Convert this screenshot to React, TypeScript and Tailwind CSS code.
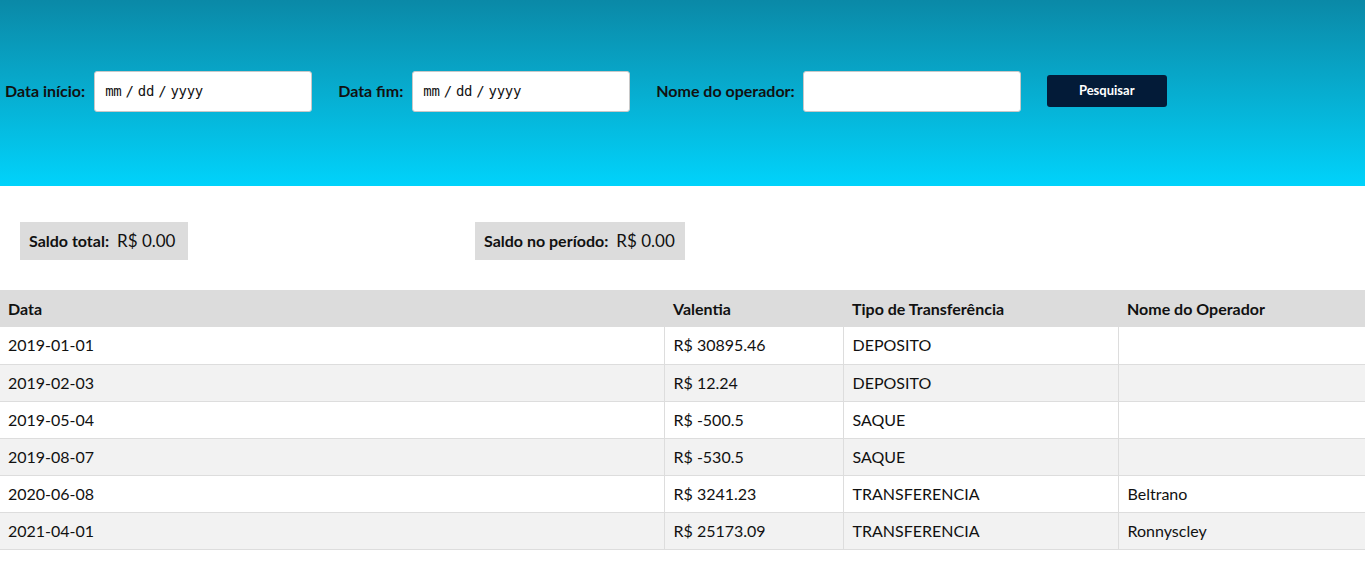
const rows = [
  { data: '2019-01-01', valor: 'R$ 30895.46', tipo: 'DEPOSITO', operador: '' },
  { data: '2019-02-03', valor: 'R$ 12.24', tipo: 'DEPOSITO', operador: '' },
  { data: '2019-05-04', valor: 'R$ -500.5', tipo: 'SAQUE', operador: '' },
  { data: '2019-08-07', valor: 'R$ -530.5', tipo: 'SAQUE', operador: '' },
  { data: '2020-06-08', valor: 'R$ 3241.23', tipo: 'TRANSFERENCIA', operador: 'Beltrano' },
  { data: '2021-04-01', valor: 'R$ 25173.09', tipo: 'TRANSFERENCIA', operador: 'Ronnyscley' },
];

function DateField() {
  return (
    <div className="w-[218px] h-[41px] bg-white rounded-[3px] border border-[#c8c8c8] flex items-center pl-[10px] text-[14px] text-[#111] font-['DejaVu_Sans_Mono',monospace] tracking-[-0.3px] [word-spacing:-4px]">
      mm / dd / yyyy
    </div>
  );
}

export default function App() {
  return (
    <div className="min-h-[581px] bg-white font-['Lato',sans-serif] text-[#111]">
      <header className="h-[186px] bg-gradient-to-b from-[#0a89a7] to-[#00d3fb] flex items-center pl-[5px] pb-[4px]">
        <div className="flex items-center">
          <label className="font-bold text-[16px] mr-[9px]">Data início:</label>
          <DateField />
          <label className="font-bold text-[16px] ml-[26px] mr-[9px]">Data fim:</label>
          <DateField />
          <label className="font-bold text-[16px] ml-[26px] mr-[8px]">Nome do operador:</label>
          <div className="w-[218px] h-[41px] bg-white rounded-[3px] border border-[#c8c8c8]" />
          <button className="ml-[26px] w-[120px] h-[32px] rounded-[3px] bg-[#031b38] text-white font-bold text-[13px]">
            Pesquisar
          </button>
        </div>
      </header>

      <div className="flex items-center pt-[36px] pb-[30px] pl-[20px]">
        <div className="w-[168px] h-[38px] bg-[#dcdcdc] flex items-center pl-[9px]">
          <span className="font-bold text-[16px] mr-[8px]">Saldo total:</span>
          <span className="text-[17px]">R$ 0.00</span>
        </div>
        <div className="ml-[287px] w-[210px] h-[38px] bg-[#dcdcdc] flex items-center pl-[9px]">
          <span className="font-bold text-[16px] mr-[8px]">Saldo no período:</span>
          <span className="text-[17px]">R$ 0.00</span>
        </div>
      </div>

      <table className="w-full border-collapse text-[16px] table-fixed">
        <colgroup>
          <col className="w-[664px]" />
          <col className="w-[179px]" />
          <col className="w-[275px]" />
          <col />
        </colgroup>
        <thead>
          <tr className="bg-[#dcdcdc] h-[37px]">
            <th className="text-left font-bold px-[8px]">Data</th>
            <th className="text-left font-bold px-[9px]">Valentia</th>
            <th className="text-left font-bold px-[9px]">Tipo de Transferência</th>
            <th className="text-left font-bold px-[9px]">Nome do Operador</th>
          </tr>
        </thead>
        <tbody>
          {rows.map((r, i) => (
            <tr key={r.data} className={i % 2 === 0 ? 'bg-white h-[37px]' : 'bg-[#f2f2f2] h-[37px]'}>
              <td className="border-b border-[#dddddd] px-[8px]">{r.data}</td>
              <td className="border border-t-0 border-[#dddddd] px-[9px]">{r.valor}</td>
              <td className="border border-t-0 border-[#dddddd] px-[9px]">{r.tipo}</td>
              <td className="border-b border-[#dddddd] px-[9px]">{r.operador}</td>
            </tr>
          ))}
        </tbody>
      </table>
    </div>
  );
}
